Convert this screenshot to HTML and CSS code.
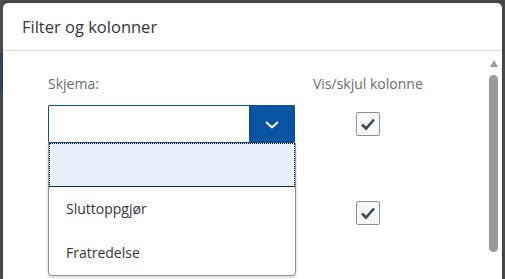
FILE: index.html
```html
<!DOCTYPE html>
<html lang="no">
<head>
<meta charset="utf-8">
<title>Filter og kolonner</title>
<link rel="stylesheet" href="styles.css">
</head>
<body>
<div class="dialog">
  <header class="dialog-header">Filter og kolonner</header>
  <div class="dialog-body">
    <div class="form">
      <div class="label">Skjema:</div>
      <div class="label col2">Vis/skjul kolonne</div>
      <div class="select-wrap">
        <div class="select">
          <div class="select-input"></div>
          <div class="select-btn">
            <svg width="14" height="8" viewBox="0 0 14 8"><path d="M1 1 L7 6.5 L13 1" fill="none" stroke="#fff" stroke-width="2"/></svg>
          </div>
        </div>
        <ul class="dropdown">
          <li class="item item-focus"></li>
          <li class="item">Sluttoppgjør</li>
          <li class="item">Fratredelse</li>
        </ul>
      </div>
      <div class="cb-cell"><span class="checkbox"><svg width="16" height="14" viewBox="0 0 16 14"><path d="M2 7.5 L6 11.5 L14 2.5" fill="none" stroke="#3d4a58" stroke-width="2.6"/></svg></span></div>
      <div class="select-placeholder"></div>
      <div class="cb-cell cb-second"><span class="checkbox"><svg width="16" height="14" viewBox="0 0 16 14"><path d="M2 7.5 L6 11.5 L14 2.5" fill="none" stroke="#3d4a58" stroke-width="2.6"/></svg></span></div>
    </div>
    <div class="scrollbar">
      <span class="arrow"></span>
      <span class="thumb"></span>
    </div>
  </div>
</div>
</body>
</html>
```
FILE: styles.css
```css
html, body {
  margin: 0;
  padding: 0;
  height: 100%;
  overflow: hidden;
}
body {
  background:
    linear-gradient(to bottom, #4d4d4d 0, #4d4d4d 52px, #2f4660 52px, #2f4660 93px, #4b4b4b 93px) left top / 3px 100% no-repeat,
    #484848;
  font-family: "Open Sans", "Noto Sans", sans-serif;
  padding: 3px 3px 0 3px;
  box-sizing: border-box;
}
.dialog {
  background: #fff;
  border-radius: 5px 5px 0 0;
  height: 100%;
  overflow: hidden;
  box-shadow: 0 0 2px rgba(0,0,0,0.3);
}
.dialog-header {
  height: 48px;
  box-sizing: border-box;
  border-bottom: 1px solid #d9d9d9;
  padding: 14px 0 0 19px;
  font-size: 16.5px;
  color: #32363a;
  line-height: 20px;
}
.dialog-body {
  display: flex;
}
.form {
  flex: 1;
  display: grid;
  grid-template-columns: 247px 112px;
  column-gap: 18px;
  grid-auto-rows: min-content;
  padding: 24px 0 0 45px;
  align-items: center;
}
.label {
  font-size: 14px;
  color: #6a6d70;
  line-height: 18px;
  margin-bottom: 12px;
}
.col2 {
  margin-left: 0;
}
.select-wrap {
  position: relative;
  height: 38px;
}
.select {
  display: flex;
  height: 38px;
  box-sizing: border-box;
  border: 1px solid #0854a0;
  border-radius: 1px;
}
.select-input {
  flex: 1;
}
.select-btn {
  width: 45px;
  background: #0854a0;
  display: flex;
  align-items: center;
  justify-content: center;
  padding-top: 2px;
  box-sizing: border-box;
}
.dropdown {
  position: absolute;
  left: 0;
  top: 38px;
  width: 248px;
  margin: 0;
  padding: 0;
  list-style: none;
  background: #fff;
  border: 1px solid #89919a;
  border-top: none;
  border-radius: 0 0 4px 4px;
  box-sizing: border-box;
  box-shadow: 0 2px 4px rgba(0,0,0,0.15);
  z-index: 2;
}
.item {
  height: 44px;
  line-height: 44px;
  padding-left: 17px;
  font-size: 14px;
  color: #32363a;
}
.item-focus {
  height: 44px;
  box-sizing: border-box;
  background: #e5f0fa;
  border-bottom: 1px solid #0854a0;
  outline: 1px dotted #000;
  outline-offset: -1px;
}
.cb-cell {
  display: flex;
  justify-content: center;
  height: 38px;
  align-items: center;
}
.checkbox {
  width: 24px;
  height: 24px;
  box-sizing: border-box;
  border: 1px solid #89919a;
  border-radius: 2px;
  background: #f7f7f7;
  display: flex;
  align-items: center;
  justify-content: center;
  margin-left: -2px;
}
.select-placeholder {
  height: 38px;
  margin-top: 51px;
}
.cb-second {
  margin-top: 51px;
}
.scrollbar {
  width: 14px;
  display: flex;
  flex-direction: column;
  align-items: center;
  padding-top: 9px;
}
.arrow {
  width: 0;
  height: 0;
  border-left: 4.5px solid transparent;
  border-right: 4.5px solid transparent;
  border-bottom: 7px solid #999;
  margin-left: -3px;
}
.thumb {
  margin-top: 8px;
  margin-left: -3px;
  width: 9px;
  height: 177px;
  background: #999;
  border-radius: 5px;
}
```
